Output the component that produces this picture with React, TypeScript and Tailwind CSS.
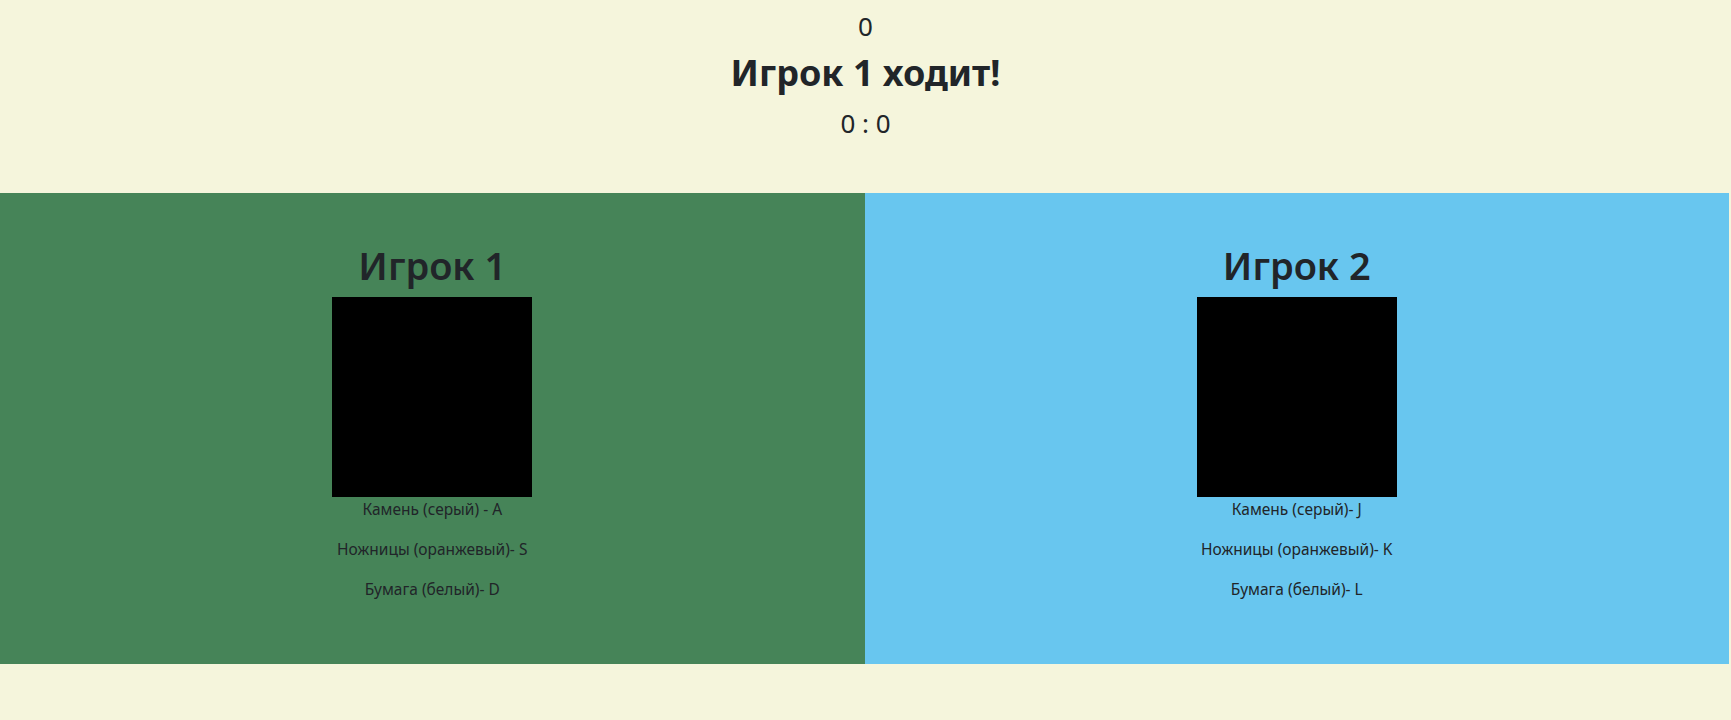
import React from "react";

type Player = {
  name: string;
  bg: string;
  keys: string[];
};

const players: Player[] = [
  {
    name: "Игрок 1",
    bg: "bg-[#468458]",
    keys: ["Камень (серый) - A", "Ножницы (оранжевый)- S", "Бумага (белый)- D"],
  },
  {
    name: "Игрок 2",
    bg: "bg-[#68c6ef]",
    keys: ["Камень (серый)- J", "Ножницы (оранжевый)- K", "Бумага (белый)- L"],
  },
];

function PlayerPanel({ player }: { player: Player }) {
  return (
    <div className={`${player.bg} flex flex-col items-center pt-12 pb-[47px]`}>
      <h1 className="text-[38px] leading-[48px] font-semibold mb-2">{player.name}</h1>
      <div className="w-[200px] h-[200px] bg-black" />
      {player.keys.map(k => (
        <p key={k} className="text-[15.5px] leading-6 mb-4">
          {k}
        </p>
      ))}
    </div>
  );
}

export default function App() {
  const timer = 0;
  const score = [0, 0];

  return (
    <div
      className="min-h-screen bg-[#f5f5dc] text-[#212529]"
      style={{ fontFamily: '"Noto Sans", "Open Sans", sans-serif' }}
    >
      <div className="flex flex-col items-center pt-[12px]">
        <div className="text-[26px] leading-[29px]">{timer}</div>
        <h2 className="text-[36px] leading-[48px] font-bold mt-[8px]">Игрок 1 ходит!</h2>
        <div className="text-[26px] leading-[29px] mt-[12px]">
          {score[0]} : {score[1]}
        </div>
      </div>
      <div className="grid grid-cols-2 w-[1729px] mt-[55px]">
        {players.map(p => (
          <PlayerPanel key={p.name} player={p} />
        ))}
      </div>
    </div>
  );
}
